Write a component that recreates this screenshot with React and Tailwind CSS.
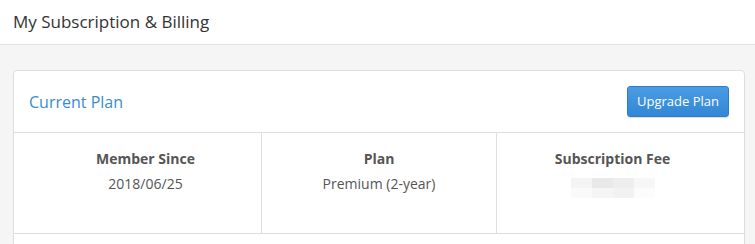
const blur = [
  ["bg-[#f4f4f4]", "bg-[#e9e9e9]", "bg-[#eeeeee]", "bg-[#f7f7f7]"],
  ["bg-[#fafafa]", "bg-[#f5f5f5]", "bg-[#f2f2f2]", "bg-[#fcfcfc]"],
];

const Stat = ({ label, children, className }) => (
  <div className={`flex flex-col items-center pt-[15px] ${className}`}>
    <div className="text-[14px] font-bold text-[#555]">{label}</div>
    <div className="mt-[4px] text-[14px] text-[#555]">{children}</div>
  </div>
);

export default function App() {
  return (
    <div className="w-[755px] h-[244px] overflow-hidden bg-[#f5f5f5] font-['Open_Sans',sans-serif]">
      {/* Page header */}
      <div className="h-[45px] bg-white border-b border-[#e2e2e2] flex items-center px-[13px]">
        <h1 className="text-[17px] text-[#333]">My Subscription &amp; Billing</h1>
      </div>

      <div className="px-[13px] pt-[25px]">
        <div className="w-[732px] bg-white border border-[#dedede] rounded-[4px]">
          {/* Card header */}
          <div className="h-[62px] flex items-center justify-between pl-[15px] pr-[15px] border-b border-[#dedede]">
            <span className="text-[16px] text-[#3a8bd1]">Current Plan</span>
            <button className="h-[31px] w-[102px] rounded-[3px] border border-[#2f7cc4] bg-gradient-to-b from-[#4a9ce2] to-[#3187d6] text-[13px] text-white shadow-[0_1px_1px_rgba(0,0,0,0.15)]">
              Upgrade Plan
            </button>
          </div>

          {/* Stats */}
          <div className="grid grid-cols-[248px_235px_1fr] h-[101px] border-b border-[#dedede]">
            <Stat label="Member Since" className="pl-[16px] border-r border-[#dedede]">
              2018/06/25
            </Stat>
            <Stat label="Plan" className="border-r border-[#dedede]">
              Premium (2-year)
            </Stat>
            <Stat label="Subscription Fee" className="pr-[16px]">
              <div className="flex flex-col pt-[5px]">
                {blur.map((row, i) => (
                  <div key={i} className="flex">
                    {row.map((c, j) => (
                      <div key={j} className={`w-[21px] h-[10px] ${c}`} />
                    ))}
                  </div>
                ))}
              </div>
            </Stat>
          </div>
          <div className="h-[40px]" />
        </div>
      </div>
    </div>
  );
}
